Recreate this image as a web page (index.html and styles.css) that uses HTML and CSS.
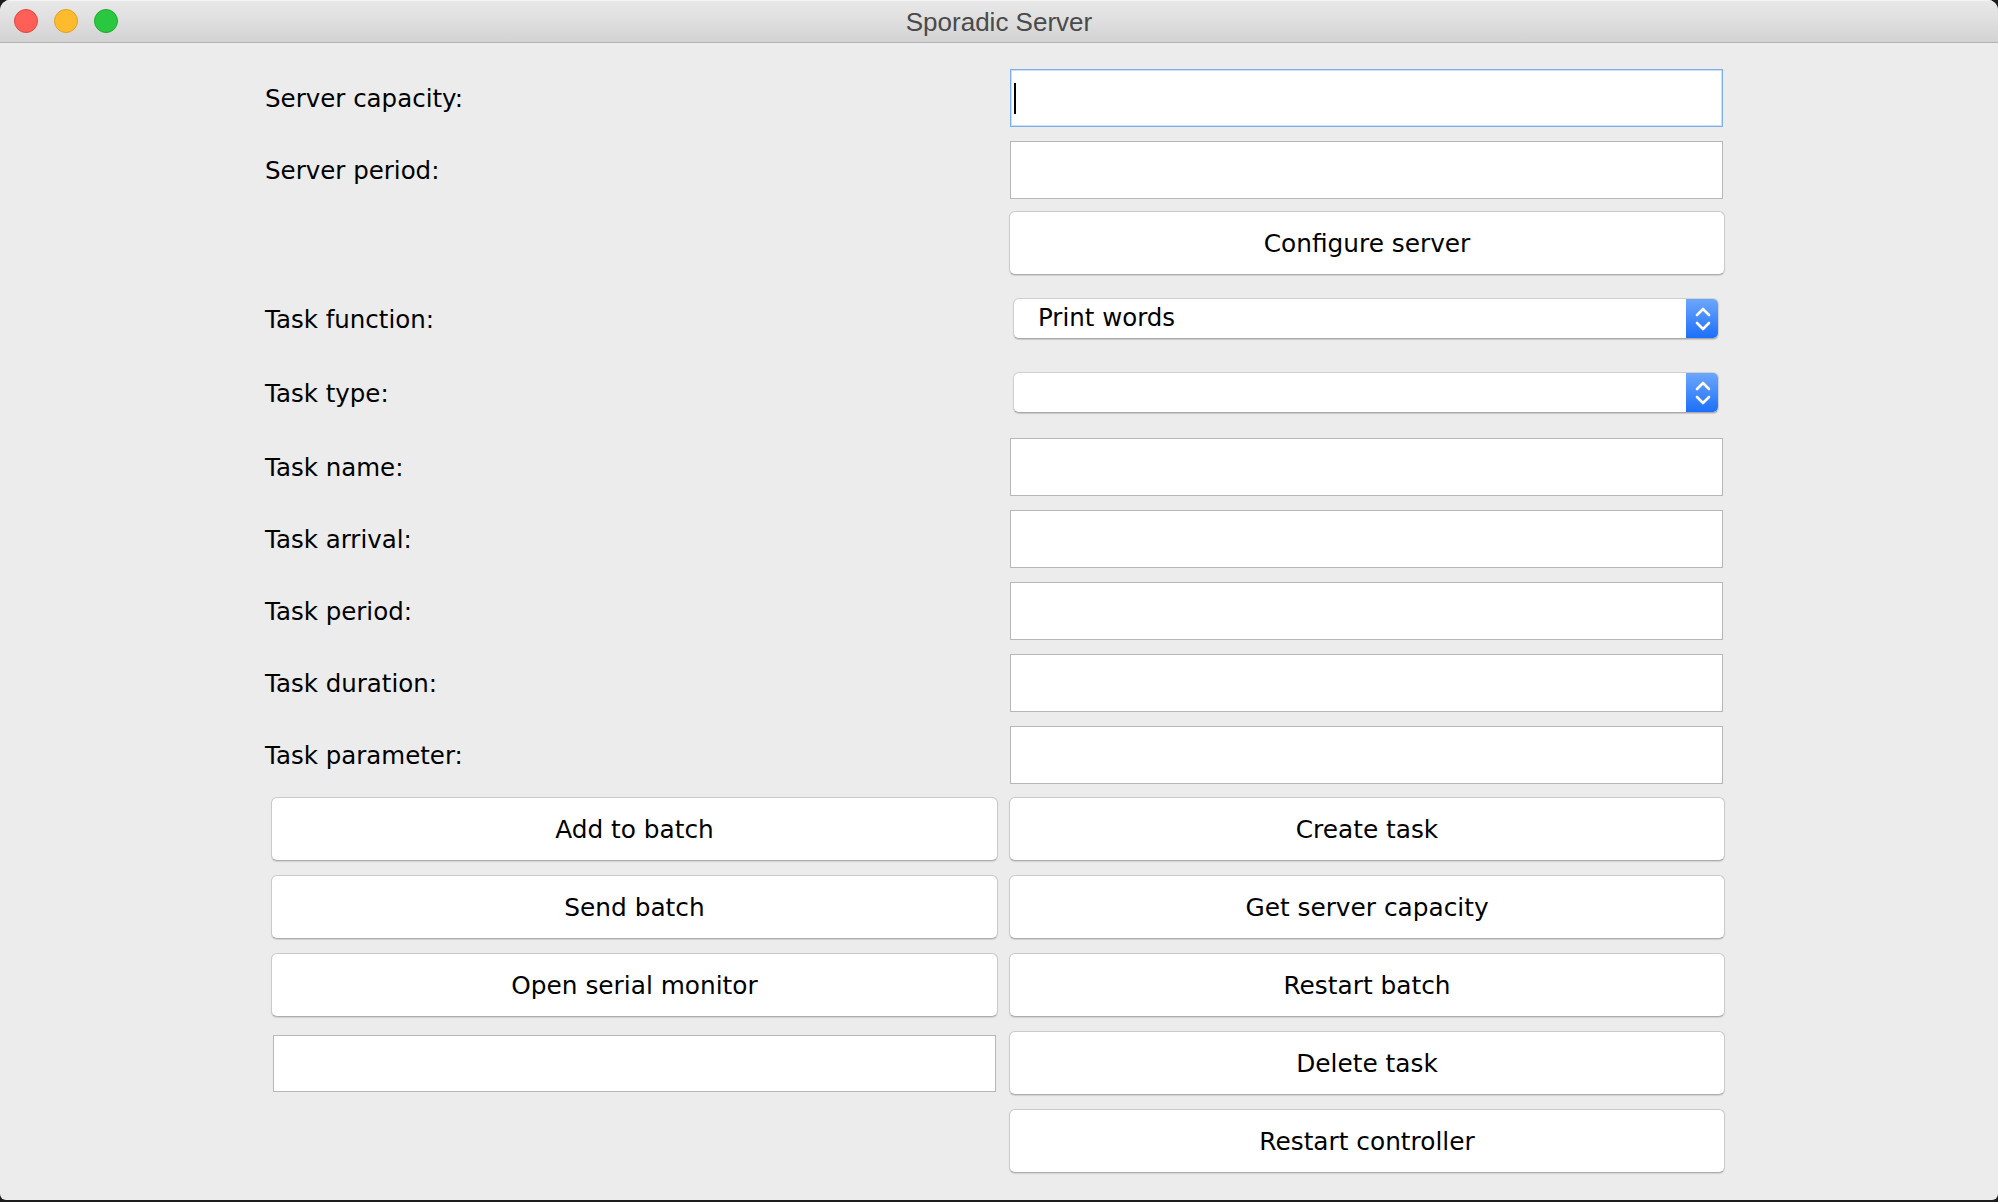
FILE: index.html
```html
<!DOCTYPE html>
<html lang="en">
<head>
<meta charset="utf-8">
<title>Sporadic Server</title>
<link rel="stylesheet" href="styles.css">
</head>
<body>
<div class="window">
  <header class="titlebar">
    <div class="lights">
      <span class="light red"></span>
      <span class="light yellow"></span>
      <span class="light green"></span>
    </div>
    <div class="title">Sporadic Server</div>
    <div></div>
  </header>
  <main class="form">
    <div class="row">
      <label class="label">Server capacity:</label>
      <div class="field field-right focus"><span class="caret"></span></div>
    </div>
    <div class="row">
      <label class="label">Server period:</label>
      <div class="field field-right"></div>
    </div>
    <div class="row mt-configure">
      <div></div>
      <button class="btn btn-right">Configure server</button>
    </div>
    <div class="row mt-combo1">
      <label class="label">Task function:</label>
      <div class="combo">
        <span class="combo-text">Print words</span>
        <span class="combo-arrow">
          <svg width="18" height="26" viewBox="0 0 18 26"><path d="M3 9 L9 3 L15 9 M3 17 L9 23 L15 17" fill="none" stroke="#fff" stroke-width="2.6" stroke-linecap="round" stroke-linejoin="round"/></svg>
        </span>
      </div>
    </div>
    <div class="row mt-combo2">
      <label class="label">Task type:</label>
      <div class="combo">
        <span class="combo-text"></span>
        <span class="combo-arrow">
          <svg width="18" height="26" viewBox="0 0 18 26"><path d="M3 9 L9 3 L15 9 M3 17 L9 23 L15 17" fill="none" stroke="#fff" stroke-width="2.6" stroke-linecap="round" stroke-linejoin="round"/></svg>
        </span>
      </div>
    </div>
    <div class="row mt-name">
      <label class="label">Task name:</label>
      <div class="field field-right"></div>
    </div>
    <div class="row">
      <label class="label">Task arrival:</label>
      <div class="field field-right"></div>
    </div>
    <div class="row">
      <label class="label">Task period:</label>
      <div class="field field-right"></div>
    </div>
    <div class="row">
      <label class="label">Task duration:</label>
      <div class="field field-right"></div>
    </div>
    <div class="row">
      <label class="label">Task parameter:</label>
      <div class="field field-right"></div>
    </div>
    <div class="row mt-buttons">
      <button class="btn btn-left">Add to batch</button>
      <button class="btn btn-right">Create task</button>
    </div>
    <div class="row">
      <button class="btn btn-left">Send batch</button>
      <button class="btn btn-right">Get server capacity</button>
    </div>
    <div class="row">
      <button class="btn btn-left">Open serial monitor</button>
      <button class="btn btn-right">Restart batch</button>
    </div>
    <div class="row">
      <div class="field field-left"></div>
      <button class="btn btn-right">Delete task</button>
    </div>
    <div class="row">
      <div></div>
      <button class="btn btn-right">Restart controller</button>
    </div>
  </main>
</div>
</body>
</html>
```
FILE: styles.css
```css
html, body {
  margin: 0;
  padding: 0;
  background: #1d1d1d;
}

body {
  font-family: "DejaVu Sans", "Noto Sans", sans-serif;
  color: #000;
}

.window {
  height: 1200px;
  background: #ececec;
  border-radius: 10px 10px 6px 6px;
  overflow: hidden;
}

.titlebar {
  height: 42px;
  border-bottom: 1px solid #b2b2b2;
  background: linear-gradient(#e9e9e9, #d3d3d3);
  box-shadow: inset 0 1px 0 #f4f4f4;
  display: grid;
  grid-template-columns: 1fr auto 1fr;
  align-items: center;
}

.lights {
  display: flex;
  gap: 16px;
  padding-left: 14px;
}

.light {
  width: 22px;
  height: 22px;
  border-radius: 50%;
  border: 1px solid;
}

.red { background: #fe5f57; border-color: #e1473f; }
.yellow { background: #febb2e; border-color: #dfa023; }
.green { background: #2ac840; border-color: #1cab2b; }

.title {
  font-family: "Liberation Sans", "Noto Sans", sans-serif;
  font-size: 26px;
  color: #4a4a4a;
  padding-top: 3px;
}

.form {
  padding: 26px 0 0 265px;
  display: flex;
  flex-direction: column;
  gap: 14px;
}

.row {
  display: grid;
  grid-template-columns: 744px 716px;
  align-items: center;
}

.mt-configure { margin-top: -2px; }
.mt-combo1 { margin-top: 9px; }
.mt-combo2 { margin-top: 19px; }
.mt-name { margin-top: 11px; }
.mt-buttons { margin-top: -1px; }

.label {
  font-size: 24.5px;
  line-height: 30px;
  padding-top: 2px;
  color: #000;
}

.field {
  box-sizing: border-box;
  height: 58px;
  background: #fff;
  border: 1px solid #b7b7b7;
  display: flex;
  align-items: center;
}

.field-right {
  margin-left: 1px;
  width: 713px;
}

.field-left {
  margin-left: 8px;
  width: 723px;
  height: 57px;
}

.field.focus {
  border-color: #7eaee8;
  box-shadow: inset 0 0 0 1px rgba(140, 185, 240, 0.45);
}

.caret {
  display: block;
  width: 2px;
  height: 31px;
  margin-left: 3px;
  background: #000;
}

.btn {
  box-sizing: border-box;
  height: 64px;
  padding: 0;
  background: #fff;
  border: 1px solid #cacaca;
  border-bottom-color: #adadad;
  border-radius: 6px;
  box-shadow: 0 1px 1px rgba(0, 0, 0, 0.12);
  font-family: "DejaVu Sans", "Noto Sans", sans-serif;
  font-size: 24.8px;
  color: #000;
}

.btn-right {
  width: 716px;
}

.btn-left {
  margin-left: 6px;
  width: 727px;
}

.combo {
  box-sizing: border-box;
  margin-left: 4px;
  width: 706px;
  height: 41px;
  display: flex;
  background: #fff;
  border: 1px solid #d0d0d0;
  border-bottom-color: #a9a9a9;
  border-radius: 6px;
  box-shadow: 0 1px 1px rgba(0, 0, 0, 0.15);
  overflow: hidden;
}

.combo-text {
  flex: 1;
  padding-left: 24px;
  font-size: 24.5px;
  line-height: 38px;
}

.combo-arrow {
  width: 33px;
  margin: -1px -1px -1px 0;
  background: linear-gradient(#6ea8fb, #1a6efb);
  display: flex;
  align-items: center;
  justify-content: center;
}
```
